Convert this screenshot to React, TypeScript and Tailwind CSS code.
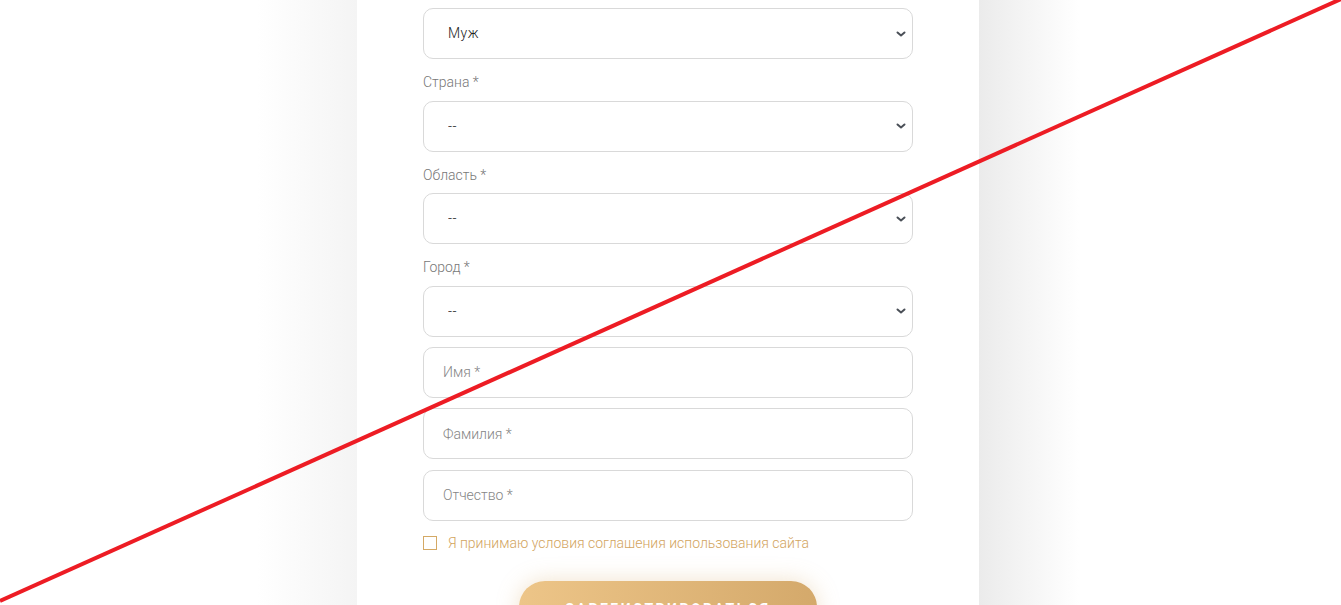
import React, {FC} from 'react';

const font = {fontFamily: 'Roboto, "Open Sans", Arial, sans-serif'};

interface SelectFieldProps {
    value: string,
    options: string[]
}

const SelectField: FC<SelectFieldProps> = ({value, options}) => {
    return (
        <div className="relative">
            <select
                defaultValue={value}
                className="block w-full h-[51px] appearance-none rounded-[10px] border border-[#d9d9d9] bg-white pl-[24px] pr-10 text-[14px] font-light tracking-[0.5px] text-[#222] outline-none"
            >
                {options.map(o => <option key={o} value={o}>{o}</option>)}
            </select>
            <svg className="pointer-events-none absolute right-[5px] top-1/2 -translate-y-1/2" width="14" height="14" viewBox="0 0 14 14">
                <path d="M3.5 5.5 L7 8.5 L10.5 5.5" fill="none" stroke="#4a4f57" strokeWidth="2" strokeLinecap="round" strokeLinejoin="round"/>
            </svg>
        </div>
    );
};

const Label: FC<{text: string}> = ({text}) => (
    <div className="mt-[13px] mb-[8.5px] text-[14px] leading-[20px] font-light text-[#777]">{text}</div>
);

const TextField: FC<{placeholder: string}> = ({placeholder}) => (
    <input
        placeholder={placeholder}
        className="block w-full h-[51px] rounded-[10px] border border-[#d9d9d9] bg-white px-[19px] text-[14px] font-light text-[#333] placeholder:text-[#858585] outline-none"
    />
);

const App: FC = () => {
    return (
        <div className="relative h-screen overflow-hidden bg-white" style={font}>
            <div className="flex min-h-full">
                <div className="w-[357px] shrink-0 bg-[linear-gradient(to_right,#ffffff_calc(100%-100px),#f4f4f4)]"/>
                <div className="w-[622px] shrink-0 bg-white px-[66px] pt-[8px]">
                    <SelectField value="Муж" options={['Муж', 'Жен']}/>
                    <Label text="Страна *"/>
                    <SelectField value="--" options={['--']}/>
                    <Label text="Область *"/>
                    <SelectField value="--" options={['--']}/>
                    <Label text="Город *"/>
                    <SelectField value="--" options={['--']}/>
                    <div className="mt-[10px] flex flex-col gap-[10.5px]">
                        <TextField placeholder="Имя *"/>
                        <TextField placeholder="Фамилия *"/>
                        <TextField placeholder="Отчество *"/>
                    </div>
                    <label className="mt-[12px] flex items-center gap-[11px] text-[14px] font-light text-[#d2a45e]">
                        <span className="h-[14px] w-[14px] border-[1.5px] border-[#d4a965] bg-white"/>
                        Я принимаю условия соглашения использования сайта
                    </label>
                    <div className="mt-[27px] flex justify-center">
                        <button className="h-[58px] w-[298px] rounded-[26px] bg-[linear-gradient(to_right,#edc588,#d4a96b)] text-[14px] font-bold uppercase tracking-[2.5px] text-white shadow-[0_0_22px_rgba(214,172,110,0.35)]">
                            Зарегистрироваться
                        </button>
                    </div>
                </div>
                <div className="flex-1 bg-[linear-gradient(to_right,#ebebeb,#ffffff_100px)]"/>
            </div>
            <svg className="pointer-events-none absolute inset-0" width="1341" height="605" viewBox="0 0 1341 605">
                <line x1="0" y1="601" x2="1341" y2="-1" stroke="#ed1c24" strokeWidth="4"/>
            </svg>
        </div>
    );
};

export default App;
